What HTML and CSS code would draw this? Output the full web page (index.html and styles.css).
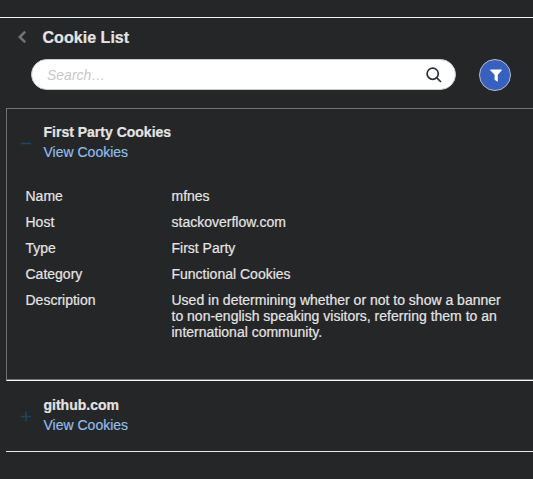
FILE: index.html
```html
<!DOCTYPE html>
<html lang="en">
<head>
<meta charset="utf-8">
<title>Cookie List</title>
<link rel="stylesheet" href="styles.css">
</head>
<body>
<main class="panel">
  <header class="header">
    <svg class="back" viewBox="0 0 10 14"><path d="M8.2 1.6 2.8 7l5.4 5.4"/></svg>
    <h1 class="title">Cookie List</h1>
  </header>
  <div class="tools">
    <div class="search">
      <span class="placeholder">Search…</span>
      <svg class="magnifier" viewBox="0 0 16 16"><circle cx="6.7" cy="6.7" r="5.6"/><path d="m10.8 10.8 4.2 4.2"/></svg>
    </div>
    <div class="filter">
      <svg class="funnel" viewBox="0 0 12 13"><path d="M.6.5h10.8q.8 0 .4.8L7.8 5.8v6.4q0 .7-.6.3L4.6 10.7V5.8L.2 1.3Q-.2.5.6.5z"/></svg>
    </div>
  </div>
  <section class="list">
    <article class="item open">
      <div class="head">
        <svg class="toggle" viewBox="0 0 10 10"><path d="M0 5.5h10"/></svg>
        <div>
          <h2 class="name">First Party Cookies</h2>
          <a class="link">View Cookies</a>
        </div>
      </div>
      <dl class="details">
        <dt>Name</dt><dd>mfnes</dd>
        <dt>Host</dt><dd>stackoverflow.com</dd>
        <dt>Type</dt><dd>First Party</dd>
        <dt>Category</dt><dd>Functional Cookies</dd>
        <dt>Description</dt><dd>Used in determining whether or not to show a banner to non-english speaking visitors, referring them to an international community.</dd>
      </dl>
    </article>
    <article class="item closed">
      <div class="head">
        <svg class="toggle" viewBox="0 0 10 10"><path d="M0 5.5h10M5 .5v10"/></svg>
        <div>
          <h2 class="name">github.com</h2>
          <a class="link">View Cookies</a>
        </div>
      </div>
    </article>
  </section>
</main>
</body>
</html>
```
FILE: styles.css
```css
* {
  box-sizing: border-box;
  margin: 0;
}

body {
  height: 479px;
  padding-top: 17px;
  overflow: hidden;
  background: #252628;
  color: #e4e4e4;
  font: 14px/16px "Liberation Sans", Arial, sans-serif;
  -webkit-text-stroke: 0.2px;
}

svg {
  display: block;
  flex: none;
  fill: none;
}

.panel {
  border-top: 1px solid #f2f2f2;
}

.header {
  display: flex;
  align-items: center;
  gap: 15.5px;
  height: 41px;
  padding-left: 17px;
}

.back {
  width: 10px;
  height: 14px;
  margin-top: -3px;
  stroke: #727274;
  stroke-width: 2.6;
}

.title {
  margin-top: -2px;
  font-size: 16px;
  line-height: 20px;
  letter-spacing: 0.04px;
}

.tools {
  display: flex;
  gap: 23px;
  height: 49px;
  padding-left: 31px;
}

.search {
  display: flex;
  align-items: center;
  justify-content: space-between;
  width: 425px;
  height: 31px;
  padding: 0 13px 0 15px;
  border: 1px solid #c8cbd0;
  border-radius: 16px;
  background: #fff;
}

.placeholder {
  color: #c8c8c8;
  font-style: italic;
  -webkit-text-stroke: 0;
}

.magnifier {
  width: 16px;
  height: 16px;
  stroke: #2b3038;
  stroke-width: 1.7;
}

.filter {
  display: flex;
  align-items: center;
  justify-content: center;
  width: 32px;
  height: 32px;
  border: 1px solid #b5bacb;
  border-radius: 50%;
  background: #3860be;
}

.funnel {
  width: 12px;
  height: 13px;
  margin: 1px 0 0 2px;
  fill: #fff;
}

.list {
  margin-left: 6px;
}

.open {
  height: 273px;
  padding-top: 15px;
  border-top: 1px solid #737375;
  border-left: 1px solid #737375;
  border-bottom: 1px solid #f5f5f5;
  box-shadow: inset 0 -1px #737375;
}

.closed {
  height: 71px;
  padding: 16px 0 0 1px;
  border-bottom: 1px solid #e6e6e6;
}

.head {
  display: flex;
  gap: 12.5px;
  padding-left: 14px;
}

.toggle {
  width: 10px;
  height: 10px;
  margin-top: 13.5px;
  overflow: visible;
  stroke: #1d4560;
  stroke-width: 1.6;
}

.name {
  font-size: 14px;
  line-height: 16px;
}

.link {
  display: block;
  margin-top: 4px;
  color: #91bce9;
}

.details {
  display: grid;
  grid-template-columns: 146px 340px;
  row-gap: 10px;
  padding: 28px 0 0 18.5px;
}
```
